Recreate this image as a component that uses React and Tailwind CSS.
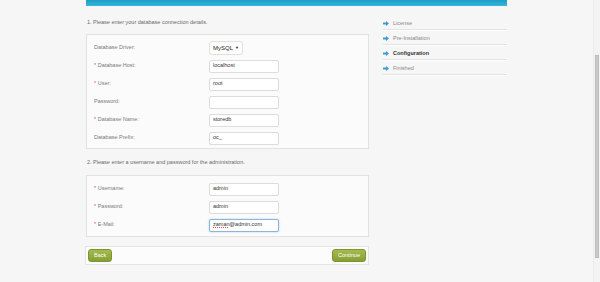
import React from "react";

const dbRows = [
  { label: "Database Host:", req: true, value: "localhost" },
  { label: "User:", req: true, value: "root" },
  { label: "Password:", req: false, value: "" },
  { label: "Database Name:", req: true, value: "storedb" },
  { label: "Database Prefix:", req: false, value: "oc_" },
];

const steps = [
  { name: "License" },
  { name: "Pre-Installation" },
  { name: "Configuration", active: true },
  { name: "Finished" },
];

function Arrow() {
  return (
    <svg width="6" height="5" viewBox="0 0 6 5" className="shrink-0">
      <path d="M0 1.6h3V0l3 2.5L3 5V3.4H0z" fill="#3d9ad6" />
    </svg>
  );
}

function Label({ children, req }) {
  return (
    <div className="w-[115px] shrink-0 text-[#7a7a7a]">
      {req && <span className="text-[#d9534f]">* </span>}
      {children}
    </div>
  );
}

function Field({ children, focus }) {
  return (
    <div
      className={
        "h-[13px] w-[70px] rounded-[2px] bg-white px-[3px] flex items-center text-[#333] border " +
        (focus ? "border-[#8db4dc] shadow-[0_0_2px_#a9c9ea]" : "border-[#dcdcdc]")
      }
    >
      {children}
    </div>
  );
}

function Button({ children }) {
  return (
    <div className="h-[13px] px-[5px] flex items-center rounded-[3px] border border-[#7b9330] bg-gradient-to-b from-[#a5bb4c] to-[#869f34] text-white">
      {children}
    </div>
  );
}

export default function App() {
  return (
    <div
      className="w-[600px] h-[282px] flex bg-[#f6f6f6] overflow-hidden text-[5.5px] leading-none"
      style={{ fontFamily: '"Liberation Sans", Arial, sans-serif' }}
    >
      <div className="flex-1">
        <div className="ml-[86px] w-[421px]">
          {/* Top banner */}
          <div className="h-[6px] bg-gradient-to-b from-[#1e9cc4] to-[#36b7de]" />

          <div className="flex gap-[14px]">
            {/* Main form column */}
            <div className="w-[283px]">
              <div className="h-[10px] mt-[12px] mb-[6px] pl-[1px] flex items-center text-[#6a6a6a]">
                1. Please enter your database connection details.
              </div>

              <div className="border border-[#e2e2e2] bg-[#fbfbfb] pt-[4px] pb-[1px] pl-[7px]">
                <div className="h-[18px] flex items-center">
                  <Label>Database Driver:</Label>
                  <div className="h-[14px] w-[34px] rounded-[3px] border border-[#e0e0e0] bg-white flex items-center justify-between pl-[3px] pr-[3px] text-[#222] text-[6px]">
                    MySQL
                    <span className="text-[4px]">▼</span>
                  </div>
                </div>
                {dbRows.map((r) => (
                  <div key={r.label} className="h-[18px] flex items-center">
                    <Label req={r.req}>{r.label}</Label>
                    <Field>{r.value}</Field>
                  </div>
                ))}
              </div>

              <div className="h-[10px] mt-[9px] mb-[7px] pl-[1px] flex items-center text-[#6a6a6a]">
                2. Please enter a username and password for the administration.
              </div>

              <div className="border border-[#e2e2e2] bg-[#fbfbfb] pt-[4px] pb-[2px] pl-[7px]">
                <div className="h-[18px] flex items-center">
                  <Label req>Username:</Label>
                  <Field>admin</Field>
                </div>
                <div className="h-[18px] flex items-center">
                  <Label req>Password:</Label>
                  <Field>admin</Field>
                </div>
                <div className="h-[18px] flex items-center">
                  <Label req>E-Mail:</Label>
                  <Field focus>
                    <span className="underline decoration-dotted decoration-[#e04a4a] underline-offset-[1px]">zaman</span>
                    @admin.com
                  </Field>
                </div>
              </div>

              <div className="mt-[9px] -ml-[1px] h-[19px] border border-[#e4e4e4] bg-[#fcfcfc] flex items-center justify-between px-[2px]">
                <Button>Back</Button>
                <Button>Continue</Button>
              </div>
            </div>

            {/* Steps sidebar */}
            <div className="w-[124px] mt-[9px]">
              {steps.map((s) => (
                <div
                  key={s.name}
                  className="h-[15px] pt-[3px] flex items-center gap-[4px] border-b border-[#e3e3e3] shadow-[0_1px_0_#ffffff]"
                >
                  <Arrow />
                  <span className={s.active ? "font-bold text-[#333]" : "text-[#888]"}>{s.name}</span>
                </div>
              ))}
            </div>
          </div>
        </div>
      </div>

      {/* Browser scrollbar */}
      <div className="w-[7px] flex flex-col border-l border-[#ececec] bg-[#f3f3f3]">
        <div className="h-[55px]" />
        <div className="h-[203px] mx-[1px] bg-[#c9c9c9] border border-[#bdbdbd]" />
      </div>
    </div>
  );
}
